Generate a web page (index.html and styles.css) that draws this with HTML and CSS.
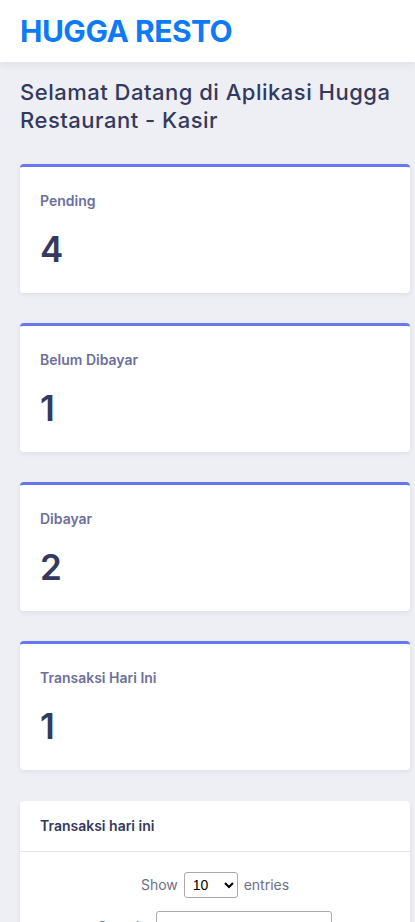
FILE: index.html
```html
<!DOCTYPE html>
<html lang="id">
<head>
    <meta charset="UTF-8">
    <meta name="viewport" content="width=device-width, initial-scale=1.0">
    <title>Hugga Resto - Kasir</title>
    <link rel="stylesheet" href="styles.css">
</head>
<body>
    <div class="navbar">
        <span class="brand">HUGGA RESTO</span>
    </div>

    <div class="main">
        <h1 class="page-title">Selamat Datang di Aplikasi Hugga Restaurant - Kasir</h1>

        <div class="card stat">
            <div class="stat-label">Pending</div>
            <div class="stat-value">4</div>
        </div>

        <div class="card stat">
            <div class="stat-label">Belum Dibayar</div>
            <div class="stat-value">1</div>
        </div>

        <div class="card stat">
            <div class="stat-label">Dibayar</div>
            <div class="stat-value">2</div>
        </div>

        <div class="card stat">
            <div class="stat-label">Transaksi Hari Ini</div>
            <div class="stat-value">1</div>
        </div>

        <div class="card table-card">
            <div class="card-header">Transaksi hari ini</div>
            <div class="card-body">
                <div class="dt-length">
                    Show
                    <select>
                        <option>10</option>
                        <option>25</option>
                        <option>50</option>
                        <option>100</option>
                    </select>
                    entries
                </div>
                <div class="dt-search">
                    <label for="search">Search:</label>
                    <input type="text" id="search">
                </div>
            </div>
        </div>
    </div>
</body>
</html>
```

FILE: styles.css
```css
body {
    font-family: 'Inter', 'Liberation Sans', Arial, sans-serif;
    margin: 0;
    background-color: #eeeff5;
    color: #34395e;
    width: 415px;
    overflow-x: hidden;
}
.navbar {
    background-color: white;
    height: 62px;
    padding: 0 20px;
    display: flex;
    align-items: center;
    box-shadow: 0 4px 8px rgba(0,0,0,0.05);
    position: relative;
}
.brand {
    color: #0d7bf5;
    font-size: 30px;
    font-weight: 700;
    letter-spacing: -0.5px;
}
.main {
    padding: 16px 5px 0 20px;
}
.page-title {
    font-size: 22px;
    font-weight: 500;
    line-height: 28px;
    letter-spacing: 0.5px;
    margin: 0 0 30px;
    color: #34395e;
}
.card {
    background-color: white;
    border-radius: 4px;
    box-shadow: 0 2px 4px rgba(52,57,94,0.08);
    margin-bottom: 30px;
}
.stat {
    border-top: 3px solid #6777ef;
    padding: 25px 20px 0;
    height: 101px;
}
.stat-label {
    font-size: 14px;
    font-weight: 600;
    color: #6d6f9c;
}
.stat-value {
    font-size: 35px;
    font-weight: 600;
    margin-top: 19px;
    color: #34395e;
}
.table-card {
    margin-top: 31px;
}
.card-header {
    padding: 0 20px;
    height: 50px;
    line-height: 50px;
    font-size: 14px;
    font-weight: 600;
    border-bottom: 1px solid #e4e4ec;
}
.card-body {
    padding: 20px;
    font-size: 14px;
    color: #6c6f8a;
    text-align: center;
}
.dt-length select {
    font-size: 14px;
    padding: 3px 4px;
    border: 1px solid #aaa;
    border-radius: 3px;
    width: 54px;
    margin: 0 2px;
    background: white;
}
.dt-search {
    margin-top: 13px;
}
.dt-search input {
    width: 170px;
    height: 28px;
    border: 1px solid #aaa;
    border-radius: 3px;
    margin-left: 4px;
}
```
